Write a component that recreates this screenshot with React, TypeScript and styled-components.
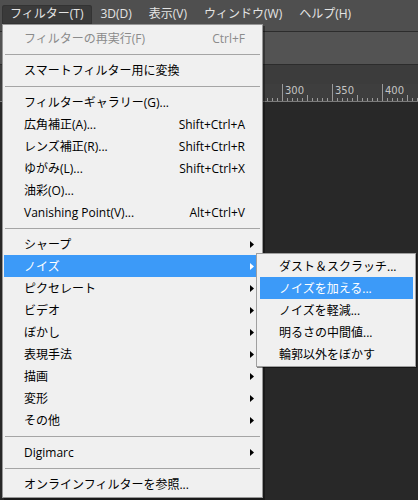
import React from "react";
import styled, { createGlobalStyle } from "styled-components";

const GlobalStyle = createGlobalStyle`
  html, body {
    margin: 0;
    padding: 0;
    background: #282828;
  }
  body {
    font-family: "Open Sans", "Noto Sans CJK JP", sans-serif;
    font-size: 12px;
  }
`;

const Page = styled.div`
  position: relative;
  width: 418px;
  height: 500px;
  overflow: hidden;
  display: flex;
  flex-direction: column;
  background: #282828;
`;

const MenuBar = styled.div`
  height: 32px;
  box-sizing: border-box;
  padding: 5px 0 0 2px;
  display: flex;
  align-items: flex-start;
  background: #4f4f4f;
  border-bottom: 1px solid #2c2c2c;
`;

const BarItem = styled.div<{ $open?: boolean }>`
  height: 19px;
  line-height: 18px;
  padding: 0 9px 0 8px;
  color: #e4e4e4;
  font-size: 12px;
  white-space: nowrap;
  border-radius: 3px 3px 0 0;
  background: ${(p) => (p.$open ? "#3a3a3a" : "transparent")};
  box-shadow: ${(p) => (p.$open ? "inset 0 0 0 1px #333" : "none")};
`;

const OptionsBar = styled.div`
  height: 33px;
  box-sizing: border-box;
  background: #535353;
  border-bottom: 1px solid #2c2c2c;
`;

const TabBar = styled.div`
  height: 19px;
  background: #3c3c3c;
`;

const RulerBox = styled.div`
  height: 18px;
  box-sizing: border-box;
  background: #3e3e3e;
  border-bottom: 1px solid #7a7a7a;
`;

const Canvas = styled.div`
  flex: 1;
  background: #282828;
`;

const Menu = styled.div`
  position: absolute;
  left: 2px;
  top: 24px;
  width: 261px;
  box-sizing: border-box;
  padding: 2px 0;
  background: #f0f0f0;
  border: 1px solid #979797;
  box-shadow: 2px 2px 0 rgba(0, 0, 0, 0.35);
`;

const SubMenu = styled(Menu)`
  left: 256px;
  top: 253px;
  width: 160px;
  padding: 1px 0;
  border-color: #a0a0a0;
  box-shadow: 1px 1px 0 rgba(0, 0, 0, 0.45);
`;

const Item = styled.div<{ $active?: boolean; $disabled?: boolean; $sub?: boolean }>`
  height: 22px;
  display: flex;
  align-items: center;
  margin: ${(p) => (p.$sub ? "0 2px 0 3px" : "0 3px 0 1px")};
  padding-left: ${(p) => (p.$sub ? "19px" : "20px")};
  color: ${(p) => (p.$active ? "#ffffff" : p.$disabled ? "#8b8b8b" : "#000000")};
  background: ${(p) => (p.$active ? "#3c9af8" : "transparent")};
  white-space: nowrap;
`;

const Label = styled.span`
  flex: 1;
`;

const Shortcut = styled.span`
  text-align: right;
`;

const ArrowSlot = styled.span`
  width: 14px;
  display: flex;
  justify-content: flex-end;
  padding-right: 5px;
  box-sizing: border-box;
`;

const Separator = styled.div`
  height: 10px;
  display: flex;
  align-items: center;
  margin: 0 2px 0 2px;

  &::after {
    content: "";
    flex: 1;
    height: 1px;
    background: #a5a5a5;
  }
`;

const Arrow = ({ color }: { color: string }) => (
  <svg width="4" height="7" viewBox="0 0 4 7">
    <path d="M0 0 L4 3.5 L0 7 Z" fill={color} />
  </svg>
);

// only the part right of the open menu is visible, so labels start at 300
const Ruler = () => {
  const ticks = [];
  const labels = [];
  for (let x = 2; x <= 418; x += 5) {
    const v = x - 282 + 300;
    const major = v % 50 === 0;
    const mid = v % 25 === 0;
    const h = major ? 17 : mid ? 6 : 3;
    ticks.push(<line key={x} x1={x + 0.5} x2={x + 0.5} y1={17 - h} y2={17} stroke="#9a9a9a" strokeWidth="1" />);
    if (major && v >= 300) {
      labels.push(
        <text key={"t" + x} x={x + 3} y={10} fill="#c4c4c4" fontSize="10" fontFamily="'DejaVu Sans', sans-serif">
          {v}
        </text>
      );
    }
  }
  return (
    <svg width="418" height="17" style={{ display: "block" }}>
      {ticks}
      {labels}
    </svg>
  );
};

type Entry =
  | { sep: true }
  | { label: string; shortcut?: string; arrow?: boolean; active?: boolean; disabled?: boolean };

const entries: Entry[] = [
  { label: "フィルターの再実行(F)", shortcut: "Ctrl+F", disabled: true },
  { sep: true },
  { label: "スマートフィルター用に変換" },
  { sep: true },
  { label: "フィルターギャラリー(G)..." },
  { label: "広角補正(A)...", shortcut: "Shift+Ctrl+A" },
  { label: "レンズ補正(R)...", shortcut: "Shift+Ctrl+R" },
  { label: "ゆがみ(L)...", shortcut: "Shift+Ctrl+X" },
  { label: "油彩(O)..." },
  { label: "Vanishing Point(V)...", shortcut: "Alt+Ctrl+V" },
  { sep: true },
  { label: "シャープ", arrow: true },
  { label: "ノイズ", arrow: true, active: true },
  { label: "ピクセレート", arrow: true },
  { label: "ビデオ", arrow: true },
  { label: "ぼかし", arrow: true },
  { label: "表現手法", arrow: true },
  { label: "描画", arrow: true },
  { label: "変形", arrow: true },
  { label: "その他", arrow: true },
  { sep: true },
  { label: "Digimarc", arrow: true },
  { sep: true },
  { label: "オンラインフィルターを参照..." },
];

const noiseItems = ["ダスト＆スクラッチ...", "ノイズを加える...", "ノイズを軽減...", "明るさの中間値...", "輪郭以外をぼかす"];

export default function App() {
  return (
    <>
      <GlobalStyle />
      <Page>
        <MenuBar>
          <BarItem $open>フィルター(T)</BarItem>
          <BarItem>3D(D)</BarItem>
          <BarItem>表示(V)</BarItem>
          <BarItem>ウィンドウ(W)</BarItem>
          <BarItem>ヘルプ(H)</BarItem>
        </MenuBar>
        <OptionsBar />
        <TabBar />
        <RulerBox>
          <Ruler />
        </RulerBox>
        <Canvas />

        <Menu>
          {entries.map((e, i) =>
            "sep" in e ? (
              <Separator key={i} />
            ) : (
              <Item key={i} $active={e.active} $disabled={e.disabled}>
                <Label>{e.label}</Label>
                {e.shortcut && <Shortcut>{e.shortcut}</Shortcut>}
                <ArrowSlot>{e.arrow && <Arrow color={e.active ? "#ffffff" : "#000000"} />}</ArrowSlot>
              </Item>
            )
          )}
        </Menu>

        <SubMenu>
          {noiseItems.map((label, i) => (
            <Item key={label} $sub $active={i === 1}>
              <Label>{label}</Label>
            </Item>
          ))}
        </SubMenu>
      </Page>
    </>
  );
}
